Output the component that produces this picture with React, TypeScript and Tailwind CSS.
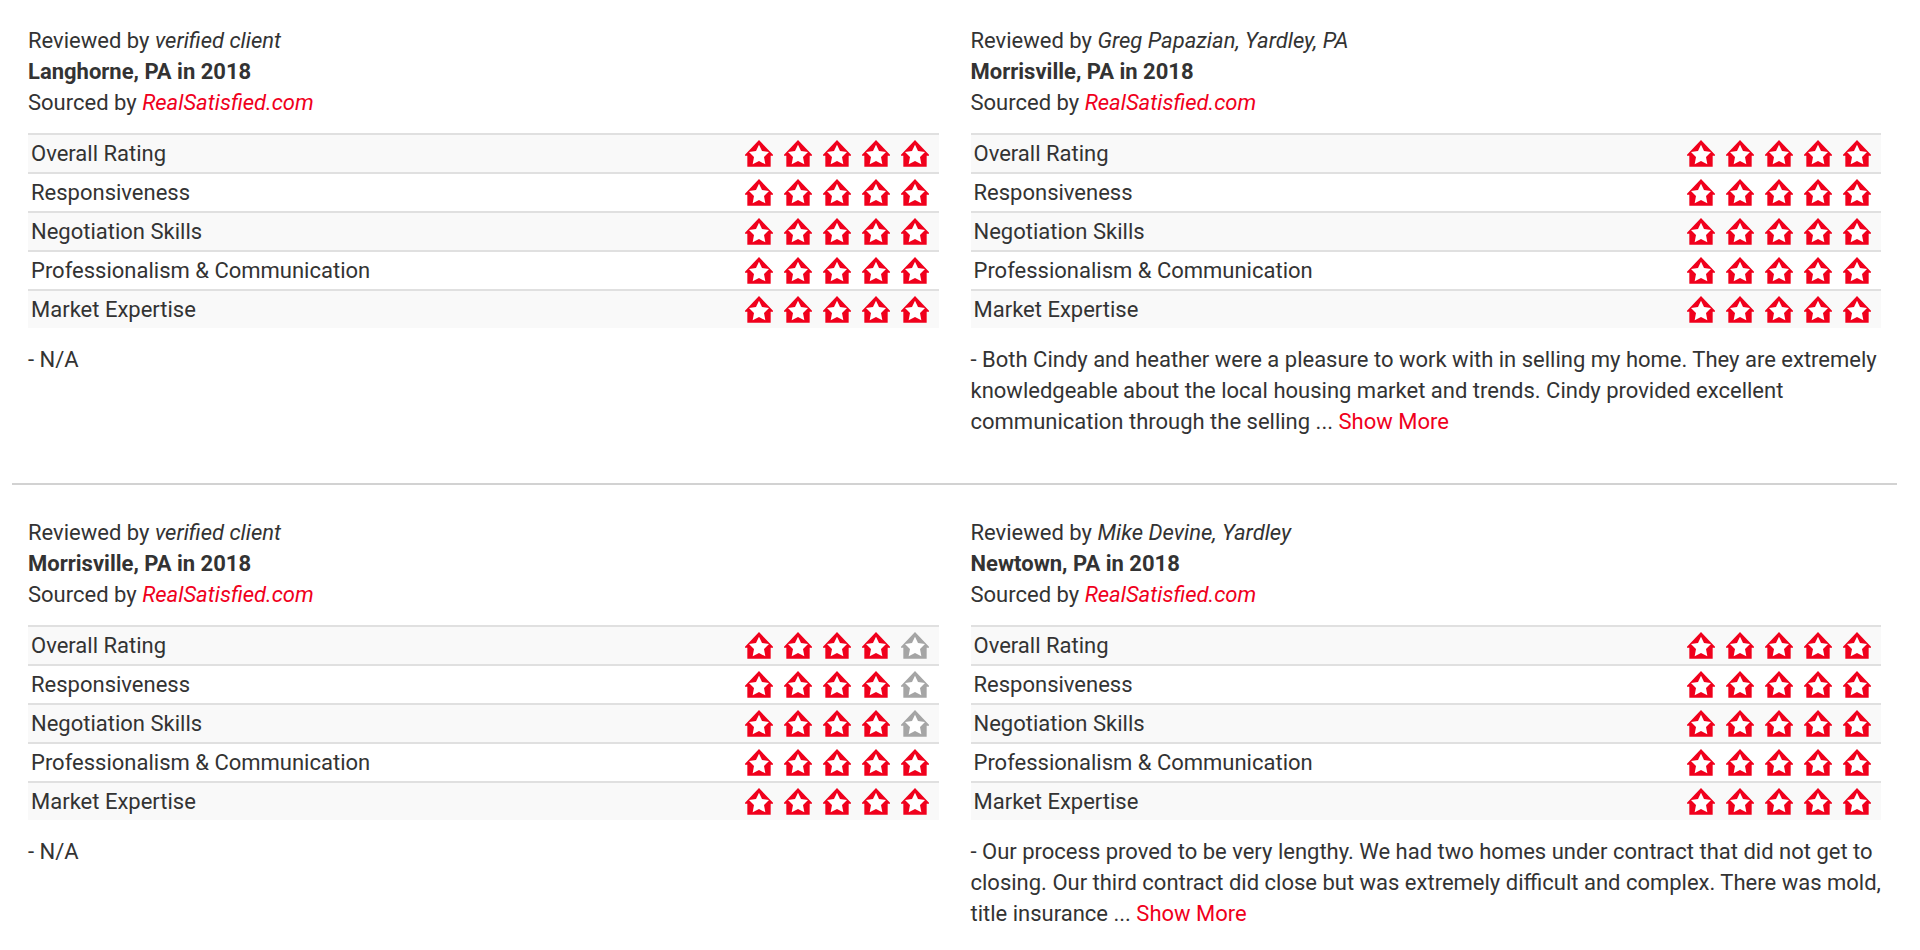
import clsx from "clsx";

const categories = [
  "Overall Rating",
  "Responsiveness",
  "Negotiation Skills",
  "Professionalism & Communication",
  "Market Expertise",
];

type Review = {
  reviewer: string;
  location: string;
  ratings: number[];
  comment: string;
  truncated?: boolean;
};

const reviews: Review[] = [
  {
    reviewer: "verified client",
    location: "Langhorne, PA in 2018",
    ratings: [5, 5, 5, 5, 5],
    comment: "N/A",
  },
  {
    reviewer: "Greg Papazian, Yardley, PA",
    location: "Morrisville, PA in 2018",
    ratings: [5, 5, 5, 5, 5],
    comment:
      "Both Cindy and heather were a pleasure to work with in selling my home. They are extremely knowledgeable about the local housing market and trends. Cindy provided excellent communication through the selling",
    truncated: true,
  },
  {
    reviewer: "verified client",
    location: "Morrisville, PA in 2018",
    ratings: [4, 4, 4, 5, 5],
    comment: "N/A",
  },
  {
    reviewer: "Mike Devine, Yardley",
    location: "Newtown, PA in 2018",
    ratings: [5, 5, 5, 5, 5],
    comment:
      "Our process proved to be very lengthy. We had two homes under contract that did not get to closing. Our third contract did close but was extremely difficult and complex. There was mold, title insurance",
    truncated: true,
  },
];

function HouseStar({ filled }: { filled: boolean }) {
  return (
    <svg
      viewBox="0 0 84 81"
      className={clsx(
        "h-[27px] w-[28px]",
        filled ? "fill-[#f0001c]" : "fill-[#a5a5a5]"
      )}
      aria-hidden="true"
    >
      <path d="M42 0L84 44V47H77V80H7V47H0V44Z" />
      <path
        className="fill-white"
        d="M42 14L51 33L72 36L57 51L61 73L42 63L23 73L27 51L12 36L33 33Z"
      />
    </svg>
  );
}

function ReviewCard({ review }: { review: Review }) {
  return (
    <article className="px-4">
      <p>
        Reviewed by <em>{review.reviewer}</em>
      </p>
      <p className="font-bold">{review.location}</p>
      <p>
        Sourced by{" "}
        <a href="#" className="text-[#f0001c] italic">
          RealSatisfied.com
        </a>
      </p>

      <table className="mt-[15px] mb-4 w-full border-separate border-spacing-0">
        <tbody>
          {categories.map((category, index) => (
            <tr key={category} className="h-[39px] odd:bg-[#f9f9f9]">
              <th
                scope="row"
                className="border-t-2 border-[#e0e0e0] pl-[3px] text-left font-normal"
              >
                {category}
              </th>
              <td className="border-t-2 border-[#e0e0e0] pr-[10px]">
                <div className="flex justify-end gap-[11px]">
                  {[1, 2, 3, 4, 5].map((star) => (
                    <HouseStar
                      key={star}
                      filled={star <= review.ratings[index]}
                    />
                  ))}
                </div>
              </td>
            </tr>
          ))}
        </tbody>
      </table>

      <p>
        {`- ${review.comment}${review.truncated ? " ... " : ""}`}
        {review.truncated && (
          <button type="button" className="text-[#f0001c]">
            Show More
          </button>
        )}
      </p>
    </article>
  );
}

export default function App() {
  const rows = [reviews.slice(0, 2), reviews.slice(2)];

  return (
    <main className="bg-white pr-[23px] pl-3 font-[Roboto,sans-serif] text-[22px] leading-[31px] text-[#333]">
      {rows.map((row, index) => (
        <section
          key={index}
          className="grid grid-cols-2 border-[#d2d2d2] pt-[25px] pb-[46px] not-first:border-t-2 not-first:pt-8 last:pb-0"
        >
          {row.map((review) => (
            <ReviewCard key={review.location} review={review} />
          ))}
        </section>
      ))}
    </main>
  );
}
